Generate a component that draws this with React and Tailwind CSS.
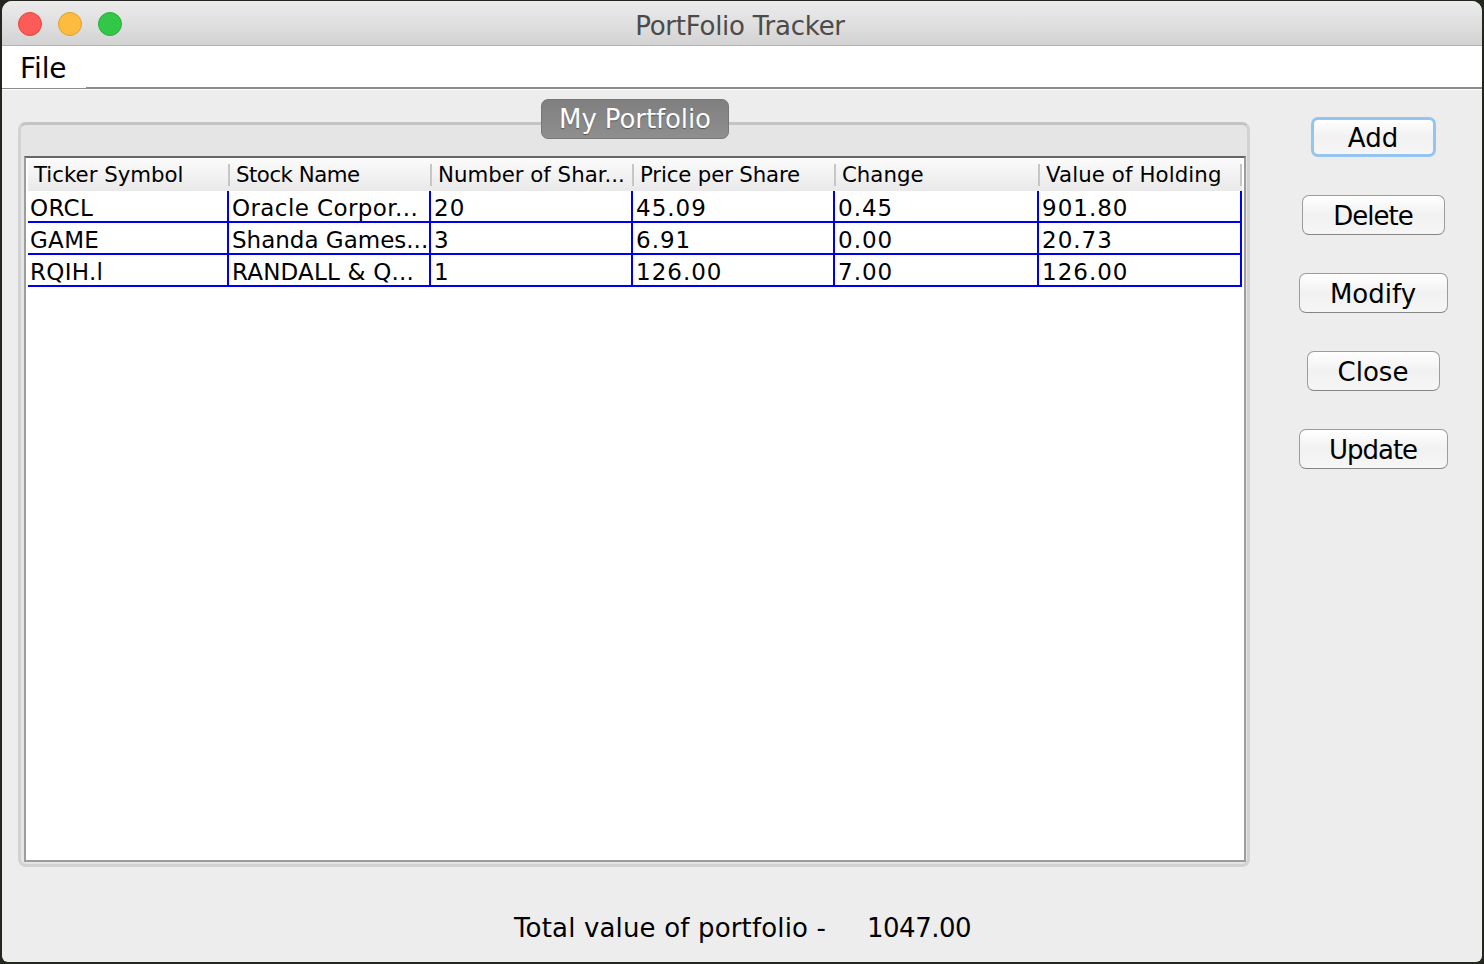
import React from "react";

const font = "font-['DejaVu_Sans',sans-serif]";

const headers = [
  { label: "Ticker Symbol", w: "w-[202px]", track: "tracking-normal" },
  { label: "Stock Name", w: "w-[202px]", track: "tracking-[-0.5px]" },
  { label: "Number of Shar...", w: "w-[202px]", track: "tracking-normal" },
  { label: "Price per Share", w: "w-[202px]", track: "tracking-[-0.15px]" },
  { label: "Change", w: "w-[204px]", track: "tracking-normal" },
  { label: "Value of Holding", w: "w-[202px]", track: "tracking-[0.1px]" },
];

const cellWidths = ["w-[201px]", "w-[202px]", "w-[202px]", "w-[202px]", "w-[204px]", "w-[203px]"];

const rows = [
  ["ORCL", "Oracle Corpor...", "20", "45.09", "0.45", "901.80"],
  ["GAME", "Shanda Games...", "3", "6.91", "0.00", "20.73"],
  ["RQIH.l", "RANDALL & Q...", "1", "126.00", "7.00", "126.00"],
];

const buttons = [
  { label: "Add", w: "w-[125px]", focus: true, track: "tracking-normal" },
  { label: "Delete", w: "w-[143px]", track: "tracking-[-1px]" },
  { label: "Modify", w: "w-[149px]", track: "tracking-normal" },
  { label: "Close", w: "w-[133px]", track: "tracking-normal" },
  { label: "Update", w: "w-[149px]", track: "tracking-[-1px]" },
];

const cellTrack = (row, i) => {
  if (i >= 2) return "tracking-[1px]";
  if (row[0] === "GAME" && i === 1) return "tracking-normal";
  if (row[0] === "RQIH.l" && i === 1) return "tracking-[0.2px]";
  if (i === 1) return "tracking-[0.4px]";
  return "tracking-[0.3px]";
};

const App = () => {
  return (
    <div className={`w-[1484px] h-[964px] overflow-hidden bg-[#23261f] pl-[2px] pr-[2px] pt-[1px] pb-[2px] ${font}`}>
      <div className="flex flex-col h-full rounded-t-[10px] rounded-b-[6px] overflow-hidden bg-[#ededed]">
        {/* title bar */}
        <div className="relative flex items-center justify-center h-[45px] pt-[6px] shrink-0 border-b border-[#b4b4b4] bg-linear-to-b from-[#ececec] to-[#d3d3d3]">
          <div className="absolute left-[16px] top-[11px] flex gap-[16px]">
            <span className="w-[24px] h-[24px] rounded-full bg-[#fc5b57] border border-[#e5473f]" />
            <span className="w-[24px] h-[24px] rounded-full bg-[#fdbc40] border border-[#e0a030]" />
            <span className="w-[24px] h-[24px] rounded-full bg-[#33c748] border border-[#2cac3b]" />
          </div>
          <span className="text-[26px] leading-none text-[#4b4b4b] ml-[-4px] tracking-[-0.25px]">PortFolio Tracker</span>
        </div>

        {/* menu bar */}
        <div className="flex h-[43px] shrink-0 bg-white">
          <div className="flex items-center h-full w-[84px] pl-[18px] pt-[4px] border-b border-[#8a8a8a] text-[28px] leading-none text-black tracking-[-0.1px]">File</div>
          <div className="flex-1 border-b-2 border-[#8a8a8a]" />
        </div>

        <div className="flex flex-1 min-h-0 border-t border-white">
          <div className="flex flex-col w-[1248px] shrink-0">
            {/* titled panel */}
            <div className="relative mt-[32px] ml-[16px] w-[1232px] h-[745px] rounded-[8px] border-[3px] border-[#d2d2d2] border-t-[#c4c4c4] bg-[#e5e5e5] pt-[31px] pl-[3px] pr-[1px] pb-[2px]">
              <div className="absolute left-[520px] top-[-26px] flex items-center justify-center w-[188px] h-[40px] rounded-[7px] border border-[#777777] bg-linear-to-b from-[#7f7f7f] to-[#8f8f8f] text-[26px] leading-none text-white tracking-[-0.1px] [text-shadow:0_1px_1px_#555555]">
                My Portfolio
              </div>
              <div className="h-full bg-white border-2 border-[#9d9d9d] border-t-[#666666] pl-[2px] pt-[1px]">
                <div className="flex h-[32px] w-[1214px] bg-linear-to-b from-[#fbfbfb] to-[#e9e9e9]">
                  {headers.map((h) => (
                    <div key={h.label} className={`${h.w} ${h.track} flex items-center h-[22px] mt-[5px] pl-[6px] border-r-2 border-[#c6c6c6] text-[21.3px] leading-none text-black whitespace-nowrap`}>
                      {h.label}
                    </div>
                  ))}
                </div>
                {rows.map((row) => (
                  <div key={row[0]} className="flex h-[32px] w-[1214px]">
                    {row.map((cell, i) => (
                      <div
                        key={i}
                        className={`${cellWidths[i]} ${cellTrack(row, i)} ${
                          i === 0 ? "pl-[2px]" : "pl-[3px]"
                        } flex items-center pt-[5px] border-r-2 border-b-2 border-[#0000f0] text-[23px] leading-none text-black whitespace-nowrap`}
                      >
                        {cell}
                      </div>
                    ))}
                  </div>
                ))}
              </div>
            </div>

            {/* total */}
            <div className="flex items-center mt-[48px] pl-[512px] text-[26px] leading-none text-black">
              <span className="w-[353px] tracking-[0.16px]">Total value of portfolio -</span>
              <span className="tracking-[-0.5px]">1047.00</span>
            </div>
          </div>

          {/* side buttons */}
          <div className="flex flex-col items-center flex-1 pt-[27px] gap-[38px] pl-[14px]">
            {buttons.map((b) => (
              <button
                key={b.label}
                className={`${b.w} ${b.track} h-[40px] pt-[2px] rounded-[7px] bg-linear-to-b from-[#ffffff] via-[#f1f1f1] to-[#f6f6f6] text-[26px] leading-none text-black ${
                  b.focus ? "border-[3px] border-[#93c5f0]" : "border border-[#9c9c9c] border-b-[#858585]"
                }`}
              >
                {b.label}
              </button>
            ))}
          </div>
        </div>
      </div>
    </div>
  );
};

export default App;
